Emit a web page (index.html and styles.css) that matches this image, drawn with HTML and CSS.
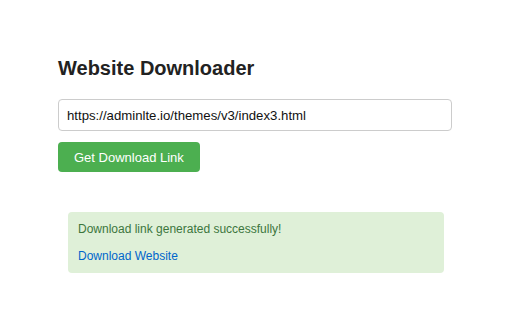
FILE: index.html
```html
<!DOCTYPE html>
<html lang="en">
  <head>
    <meta charset="UTF-8" />
    <meta name="viewport" content="width=device-width, initial-scale=1.0" />
    <title>Website Downloader</title>
    <link rel="stylesheet" href="styles.css">
  </head>
  <body>
    <!-- Downloader Form -->
    <div class="container">
      <h1>Website Downloader</h1>
      <input type="text" id="urlInput" class="url-input" value="https://adminlte.io/themes/v3/index3.html" />
      <button class="get-btn" id="getBtn">Get Download Link</button>
      <!-- Result -->
      <div class="result" id="result">
        <p>Download link generated successfully!</p>
        <a href="#" class="download-link">Download Website</a>
      </div>
    </div>
  </body>
</html>
```

FILE: styles.css
```css
/* Base Styles */
* {
  margin: 0;
  padding: 0;
  box-sizing: border-box;
  font-family: "Liberation Sans", Arial, sans-serif;
}

body {
  background: #fff;
  color: #222;
}

.container {
  width: 394px;
  margin: 0 0 0 58px;
  padding-top: 57px;
}

h1 {
  font-size: 20px;
  font-weight: bold;
  color: #222;
  margin-bottom: 19px;
}

/* Form */
.url-input {
  display: block;
  width: 100%;
  height: 32px;
  padding: 0 8px;
  font-size: 13.2px;
  color: #111;
  border: 1px solid #ccc;
  border-radius: 4px;
  outline: none;
}

.get-btn {
  display: block;
  margin-top: 11px;
  height: 30px;
  padding: 0 16px;
  font-size: 13px;
  color: #fff;
  background: #4caf50;
  border: none;
  border-radius: 4px;
  cursor: pointer;
}

/* Result */
.result {
  margin: 40px 8px 0 10px;
  padding: 10px;
  background: #dff0d8;
  border-radius: 4px;
  font-size: 12px;
  line-height: 14px;
}

.result p {
  color: #3c763d;
  margin-bottom: 13px;
}

.download-link {
  color: #0066cc;
  text-decoration: none;
}
```
